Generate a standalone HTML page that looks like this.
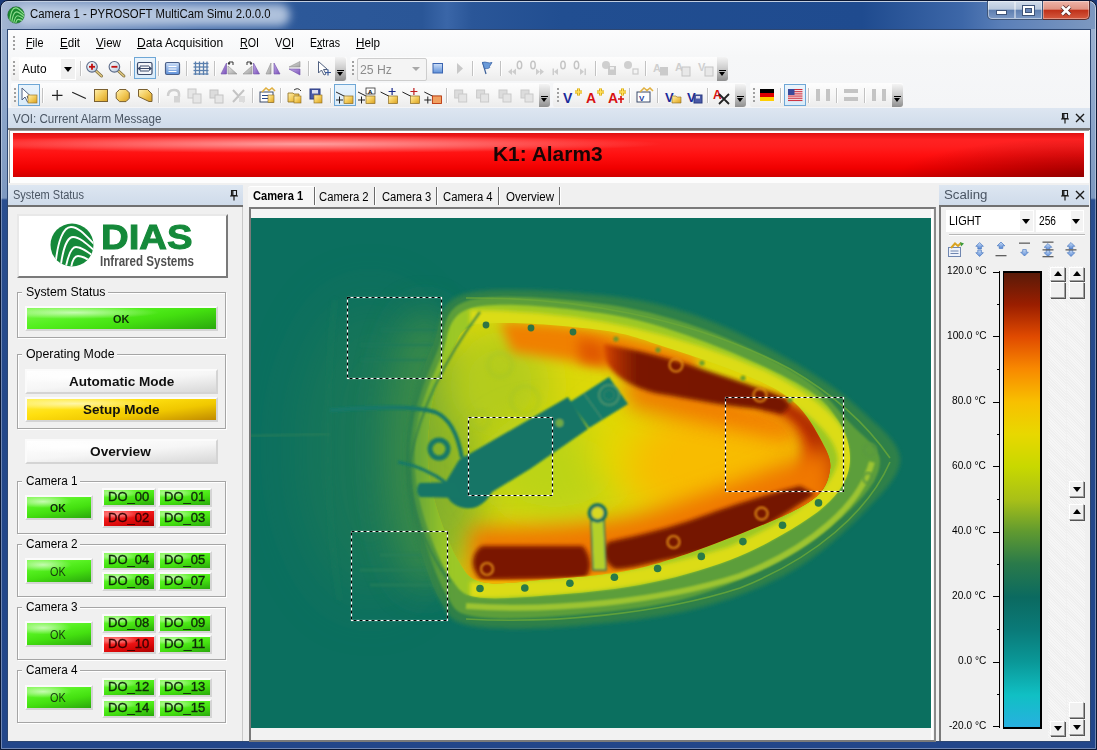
<!DOCTYPE html><html><head><meta charset="utf-8"><style>
*{margin:0;padding:0;box-sizing:border-box}
html,body{width:1097px;height:750px;overflow:hidden;background:#1b3a78;font-family:"Liberation Sans",sans-serif;font-size:12px;color:#000}
.a{position:absolute}
.t{position:absolute;white-space:nowrap;transform-origin:0 0}
.sep{position:absolute;width:2px;border-left:1px solid #c2c2c2;border-right:1px solid #fff}
.grip{position:absolute;width:2px;background:repeating-linear-gradient(#a0a0a0 0 2px,transparent 2px 4px)}
.chev{position:absolute;width:11px;background:linear-gradient(180deg,#f4f4f4 0%,#cfcfcf 45%,#8f8f8f 100%);border-radius:0 3px 3px 0}
.chev:after{content:"";position:absolute;left:2px;bottom:5px;width:0;height:0;border-top:4px solid #000;border-left:3.5px solid transparent;border-right:3.5px solid transparent}
.chev:before{content:"";position:absolute;left:2px;bottom:10px;width:7px;height:1.5px;background:#000}
.hl{position:absolute;border:1px solid #6ea7d6;background:linear-gradient(#eaf4fc,#d9ebf9)}
.ph{position:absolute;height:22px;background:linear-gradient(#dde6f1,#cfdbea);border-bottom:2px solid #707070}
.grp{position:absolute;border:1px solid #a5a5a5;box-shadow:inset 1px 1px 0 #fff,1px 1px 0 #fff}
.gla{position:absolute;background:#f0f0f0}
.bo{position:absolute;border:2px solid;border-color:#fbfbfb #d4d4d4 #d4d4d4 #fbfbfb}
.gbtn{background:radial-gradient(ellipse 45% 30% at 25% 22%,rgba(230,255,220,.75),rgba(230,255,220,0) 100%),linear-gradient(170deg,#7ff84e 0%,#55f020 35%,#44e010 60%,#2aa80c 100%)}
.rbtn{background:radial-gradient(ellipse 45% 30% at 25% 22%,rgba(255,220,220,.6),rgba(255,220,220,0) 100%),linear-gradient(170deg,#ff4a4a 0%,#f01818 40%,#d80808 70%,#a80000 100%)}
.sb{position:absolute;background:#f0f0f0;border:1px solid;border-color:#fff #a0a0a0 #a0a0a0 #fff;box-shadow:1px 1px 0 #555}
</style></head><body><div class="a" style="left:0px;top:0px;width:1097px;height:750px;background:linear-gradient(180deg,#a0b4d2 0,#8aa4c9 120px,#7d98c0 197px,#2a4e8f 199px,#24488a 400px,#22468a 750px);border:1px solid #0a1733;border-radius:8px 8px 0 0"></div>
<div class="a" style="left:1px;top:1px;width:1095px;height:748px;border:1px solid rgba(255,255,255,.35);border-radius:7px 7px 0 0"></div>
<div class="a" style="left:2px;top:2px;width:1093px;height:27px;border-radius:6px 6px 0 0;background:linear-gradient(90deg,#a4b6d2 0,#8aa2c8 30px,#3f68a8 200px,#2c5899 300px,#2a5697 420px,#3a66a8 445px,#2a5698 470px,#214e91 560px,#1f4b8f 860px,#3d67a8 960px,#5a7fb8 1000px,#7d98c0 1093px)"></div>
<div class="a" style="left:16px;top:4px;width:274px;height:22px;border-radius:11px;background:rgba(196,210,230,.85);filter:blur(4px)"></div>
<svg class="a" style="left:7px;top:6px" width="18" height="18" viewBox="0 0 46 46"><defs><clipPath id="ic"><circle cx="23" cy="23" r="21"/></clipPath></defs><circle cx="23" cy="23" r="21" fill="#1a8a30"/><circle cx="23" cy="23" r="21" fill="none" stroke="#0d5a1c" stroke-width="1.5"/><g clip-path="url(#ic)" stroke="#8edc8e" stroke-width="3" fill="none">
<path d="M7 38 C9 20 14 5 22 5 C30 5 37 14 47 24"/>
<path d="M12 42 C14 28 18 15 24 15 C31 15 38 22 47 30"/>
<path d="M17 44 C19 35 22 25 27 25 C33 25 39 30 47 36"/>
<path d="M22 46 C23 40 25 34 29 34 C34 34 39 37 45 42"/></g></svg>
<div class="t" style="left:29.50px;top:8.42px;font-size:12.5px;line-height:12.5px;color:#0a0a0a;transform:scaleX(0.9095);">Camera 1 - PYROSOFT MultiCam Simu 2.0.0.0</div>
<div class="a" style="left:987px;top:1px;width:29px;height:19px;border:1px solid #3e5578;border-top:none;border-radius:0 0 0 5px;background:linear-gradient(#d2ddeb 0,#b9c8dc 45%,#5f7fb0 52%,#7d9ac6 100%);box-shadow:inset 0 0 0 1px rgba(255,255,255,.45)"><div class="a" style="left:8px;top:9px;width:11px;height:5px;background:#fff;border:1px solid #3f5478"></div></div>
<div class="a" style="left:1015px;top:1px;width:28px;height:19px;border:1px solid #3e5578;border-top:none;border-left:none;background:linear-gradient(#d2ddeb 0,#b9c8dc 45%,#5f7fb0 52%,#7d9ac6 100%);box-shadow:inset 0 0 0 1px rgba(255,255,255,.45)"><div class="a" style="left:8px;top:5px;width:11px;height:9px;border:2.5px solid #fff;box-shadow:0 0 0 1px #3f5478,inset 0 0 0 1px #3f5478;background:#6a86b6"></div></div>
<div class="a" style="left:1043px;top:1px;width:47px;height:19px;border:1px solid #5a2e2e;border-top:none;border-left:none;border-radius:0 0 5px 0;background:linear-gradient(#eeb4a8 0,#e09484 45%,#c0321a 52%,#d45a40 100%);box-shadow:inset 0 0 0 1px rgba(255,255,255,.35)"><svg class="a" style="left:16px;top:3px" width="15" height="13"><path d="M3 2.5 L11 10.5 M11 2.5 L3 10.5" stroke="#5a2a2a" stroke-width="4.2"/><path d="M3 2.5 L11 10.5 M11 2.5 L3 10.5" stroke="#fff" stroke-width="2.6"/></svg></div>
<div class="a" style="left:7px;top:29px;width:1084px;height:713px;background:#f0f0f0;border:1px solid #2d4772"></div>
<div class="a" style="left:8px;top:30px;width:1082px;height:27px;background:linear-gradient(#fcfcfd,#f6f7f8)"></div>
<div class="grip" style="left:13px;top:36px;height:14px"></div>
<div class="t" style="left:26.40px;top:36.84px;font-size:12px;line-height:12px;color:#000;transform:scaleX(0.8998);text-underline-offset:1px"><u>F</u>ile</div>
<div class="t" style="left:60.20px;top:36.84px;font-size:12px;line-height:12px;color:#000;transform:scaleX(0.9672);text-underline-offset:1px"><u>E</u>dit</div>
<div class="t" style="left:95.70px;top:36.84px;font-size:12px;line-height:12px;color:#000;transform:scaleX(0.9692);text-underline-offset:1px"><u>V</u>iew</div>
<div class="t" style="left:137.40px;top:36.84px;font-size:12px;line-height:12px;color:#000;transform:scaleX(1.0005);text-underline-offset:1px"><u>D</u>ata Acquisition</div>
<div class="t" style="left:240.00px;top:36.84px;font-size:12px;line-height:12px;color:#000;transform:scaleX(0.8906);text-underline-offset:1px"><u>R</u>OI</div>
<div class="t" style="left:275.00px;top:36.84px;font-size:12px;line-height:12px;color:#000;transform:scaleX(0.9191);text-underline-offset:1px">V<u>O</u>I</div>
<div class="t" style="left:310.00px;top:36.84px;font-size:12px;line-height:12px;color:#000;transform:scaleX(0.8821);text-underline-offset:1px">E<u>x</u>tras</div>
<div class="t" style="left:356.00px;top:36.84px;font-size:12px;line-height:12px;color:#000;transform:scaleX(0.9724);text-underline-offset:1px"><u>H</u>elp</div>
<div class="a" style="left:8px;top:57px;width:1082px;height:51px;background:linear-gradient(#f6f7f8,#f4f5f7)"></div>
<div class="a" style="left:11px;top:57px;width:336px;height:24px;background:linear-gradient(#fdfdfd 0,#f6f6f6 50%,#ececec 100%);border-radius:2px"></div>
<div class="a" style="left:350px;top:57px;width:378px;height:24px;background:linear-gradient(#fdfdfd 0,#f6f6f6 50%,#ececec 100%);border-radius:2px"></div>
<div class="a" style="left:11px;top:83px;width:539px;height:24px;background:linear-gradient(#fdfdfd 0,#f6f6f6 50%,#ececec 100%);border-radius:2px"></div>
<div class="a" style="left:553px;top:83px;width:193px;height:24px;background:linear-gradient(#fdfdfd 0,#f6f6f6 50%,#ececec 100%);border-radius:2px"></div>
<div class="a" style="left:750px;top:83px;width:153px;height:24px;background:linear-gradient(#fdfdfd 0,#f6f6f6 50%,#ececec 100%);border-radius:2px"></div>
<div class="chev" style="left:335px;top:57px;height:24px"></div>
<div class="chev" style="left:717px;top:57px;height:24px"></div>
<div class="chev" style="left:539px;top:84px;height:23px"></div>
<div class="chev" style="left:735px;top:84px;height:23px"></div>
<div class="chev" style="left:892px;top:84px;height:23px"></div>
<div class="grip" style="left:13px;top:61px;height:15px"></div>
<div class="grip" style="left:352px;top:61px;height:15px"></div>
<div class="grip" style="left:14px;top:88px;height:15px"></div>
<div class="grip" style="left:557px;top:88px;height:15px"></div>
<div class="grip" style="left:753px;top:88px;height:15px"></div>
<div class="sep" style="left:80px;top:61px;height:15px"></div>
<div class="sep" style="left:130px;top:61px;height:15px"></div>
<div class="sep" style="left:158px;top:61px;height:15px"></div>
<div class="sep" style="left:186px;top:61px;height:15px"></div>
<div class="sep" style="left:214px;top:61px;height:15px"></div>
<div class="sep" style="left:308px;top:61px;height:15px"></div>
<div class="sep" style="left:472px;top:61px;height:15px"></div>
<div class="sep" style="left:500px;top:61px;height:15px"></div>
<div class="sep" style="left:595px;top:61px;height:15px"></div>
<div class="sep" style="left:645px;top:61px;height:15px"></div>
<div class="sep" style="left:42px;top:88px;height:15px"></div>
<div class="sep" style="left:158px;top:88px;height:15px"></div>
<div class="sep" style="left:252px;top:88px;height:15px"></div>
<div class="sep" style="left:280px;top:88px;height:15px"></div>
<div class="sep" style="left:330px;top:88px;height:15px"></div>
<div class="sep" style="left:446px;top:88px;height:15px"></div>
<div class="sep" style="left:629px;top:88px;height:15px"></div>
<div class="sep" style="left:657px;top:88px;height:15px"></div>
<div class="sep" style="left:707px;top:88px;height:15px"></div>
<div class="sep" style="left:780px;top:88px;height:15px"></div>
<div class="sep" style="left:808px;top:88px;height:15px"></div>
<div class="sep" style="left:836px;top:88px;height:15px"></div>
<div class="sep" style="left:864px;top:88px;height:15px"></div>
<div class="hl" style="left:134px;top:57px;width:22px;height:22px"></div>
<div class="hl" style="left:18px;top:84px;width:22px;height:22px"></div>
<div class="hl" style="left:334px;top:84px;width:22px;height:22px"></div>
<div class="hl" style="left:784px;top:84px;width:22px;height:22px"></div>
<div class="a" style="left:19px;top:58px;width:57px;height:22px;background:#fff"></div>
<div class="a" style="left:61px;top:59px;width:14px;height:20px;background:#f0f0f0"></div>
<div class="a" style="left:64px;top:67px;width:0px;height:0px;border-top:5px solid #000;border-left:4px solid transparent;border-right:4px solid transparent"></div>
<div class="t" style="left:21.50px;top:62.64px;font-size:12px;line-height:12px;color:#000;transform:scaleX(0.9925);">Auto</div>
<div class="a" style="left:357px;top:58px;width:70px;height:23px;background:#f4f4f4;border:1px solid #cdcdcd;border-radius:2px"></div>
<div class="a" style="left:412px;top:67px;width:0px;height:0px;border-top:4px solid #a8a8a8;border-left:4px solid transparent;border-right:4px solid transparent"></div>
<div class="t" style="left:360.00px;top:63.84px;font-size:12px;line-height:12px;color:#8c8c8c;transform:scaleX(1.0208);">25 Hz</div>
<svg class="a" style="left:0;top:0" width="1097" height="110"><defs>
<linearGradient id="gold" x1="0" y1="0" x2="1" y2="1"><stop offset="0" stop-color="#fff0b0"/><stop offset=".5" stop-color="#f3cb5a"/><stop offset="1" stop-color="#d9a020"/></linearGradient>
<linearGradient id="blu" x1="0" y1="0" x2="0" y2="1"><stop offset="0" stop-color="#cfe0f8"/><stop offset="1" stop-color="#5d8fd8"/></linearGradient>
<linearGradient id="lens" x1="0" y1="0" x2="1" y2="1"><stop offset="0" stop-color="#ffffff"/><stop offset="1" stop-color="#b8c8dc"/></linearGradient>
<linearGradient id="pur" x1="0" y1="0" x2="1" y2="1"><stop offset="0" stop-color="#c0a8e8"/><stop offset="1" stop-color="#7a50b8"/></linearGradient>
<linearGradient id="gry" x1="0" y1="0" x2="1" y2="1"><stop offset="0" stop-color="#e8e8e8"/><stop offset="1" stop-color="#a0a0a0"/></linearGradient>
<linearGradient id="dis" x1="0" y1="0" x2="1" y2="1"><stop offset="0" stop-color="#e4e4e4"/><stop offset="1" stop-color="#c4c4c4"/></linearGradient>
</defs><path d="M95 70 L101.5 76" stroke="#7a6a3a" stroke-width="3" stroke-linecap="round"/><path d="M95 70 L101.5 76" stroke="#e0c880" stroke-width="1.6" stroke-linecap="round"/><circle cx="92" cy="66.8" r="5.3" fill="url(#lens)" stroke="#5a6a88" stroke-width="1.1"/><path d="M89 66.8 h6" stroke="#c01010" stroke-width="1.8"/><path d="M92 63.8 v6" stroke="#c01010" stroke-width="1.8"/><path d="M117.4 70 L123.9 76" stroke="#7a6a3a" stroke-width="3" stroke-linecap="round"/><path d="M117.4 70 L123.9 76" stroke="#e0c880" stroke-width="1.6" stroke-linecap="round"/><circle cx="114.4" cy="66.8" r="5.3" fill="url(#lens)" stroke="#5a6a88" stroke-width="1.1"/><path d="M111.4 66.8 h6" stroke="#c01010" stroke-width="1.8"/><rect x="137.5" y="62.5" width="14.5" height="12" rx="1.5" fill="#f4f6fa" stroke="#3a4a6a" stroke-width="1.2"/><path d="M140 66h9M140 68.5h9M140 71h9" stroke="#3a4a6a" stroke-width="1"/><path d="M137.5 68.5 l3 -2.5 v5z M152 68.5 l-3 -2.5 v5z" fill="#3a4a6a"/><rect x="165.5" y="62.5" width="14" height="12" rx="1.5" fill="url(#blu)" stroke="#4a5f88" stroke-width="1.2"/><path d="M168.5 66.5h8M168.5 69h8M168.5 71.5h8" stroke="#fff" stroke-width="1"/><g stroke="#5a7fae" stroke-width="1.3"><path d="M195.5 61.5v13.5"/><path d="M199.5 61.5v13.5"/><path d="M203.5 61.5v13.5"/><path d="M207 61.5v13.5"/><path d="M193.5 63.5h15"/><path d="M193.5 67h15"/><path d="M193.5 70.5h15"/><path d="M193.5 74h15"/></g><path d="M221 74 L226.5 63 V74z" fill="url(#pur)" stroke="#7050a8" stroke-width=".6"/><path d="M228 74 V66 L237 74z" fill="url(#gry)" stroke="#909090" stroke-width=".6"/><path d="M229 65 v-3 h4 v3" stroke="#333" stroke-width="1" fill="none"/><path d="M227.5 64 l1.5 -2 1.5 2" fill="#333"/><path d="M243 74 L252 66 V74z" fill="url(#gry)" stroke="#909090" stroke-width=".6"/><path d="M253.5 74 V63 L259.5 74z" fill="url(#pur)" stroke="#7050a8" stroke-width=".6"/><path d="M247 65 v-3 h4 v3" stroke="#333" stroke-width="1" fill="none"/><path d="M249.5 64 l1.5 -2 1.5 2" fill="#333"/><path d="M266 74 L271 63 V74z" fill="url(#gry)" stroke="#909090" stroke-width=".6"/><path d="M274 74 V63 L280 74z" fill="url(#pur)" stroke="#7050a8" stroke-width=".6"/><path d="M289 67 L300 61.5 V67z" fill="url(#gry)" stroke="#909090" stroke-width=".6"/><path d="M289 69 L300 69 V75z" fill="url(#pur)" stroke="#7050a8" stroke-width=".6"/><path d="M318.5 61.5 V73 L321.5 70 L324 75 L326 74 L323.5 69.5 L327.5 69.5z" fill="#fff" stroke="#506080" stroke-width="1"/><path d="M325 72.5h6M328 69.5v6" stroke="#3a5a9a" stroke-width="1.2"/><rect x="433" y="63.5" width="9.5" height="9.5" fill="url(#blu)" stroke="#3a64b0" stroke-width="1"/><path d="M457 63 L463 68.5 L457 74z" fill="#c8c8c8"/><path d="M482.5 62 L486 74" stroke="#3a5f98" stroke-width="1.2"/><path d="M482.5 62.5 C486 61 488 64 492 62.5 L489.5 66.5 C491 68 487 69 484.5 68.5z" fill="#6a9ad8" stroke="#3a64a8" stroke-width=".8"/><g fill="none" stroke="#c4c4c4" stroke-width="1.5"><ellipse cx="519.5" cy="65" rx="2.2" ry="3.8"/><ellipse cx="533" cy="65" rx="2.2" ry="3.8"/><ellipse cx="563" cy="65" rx="2.2" ry="3.8"/><ellipse cx="576.5" cy="65" rx="2.2" ry="3.8"/></g><g fill="#cdcdcd"><path d="M512 68.5 l-4 3.3 4 3.3z M516 68.5 l-4 3.3 4 3.3z"/><path d="M536 68.5 l4 3.3 -4 3.3z M540 68.5 l4 3.3 -4 3.3z"/><path d="M558 68.5 l-4 3.3 4 3.3z"/><rect x="552.5" y="68.5" width="1.5" height="6.6"/><path d="M580 68.5 l4 3.3 -4 3.3z"/><rect x="584.5" y="68.5" width="1.5" height="6.6"/></g><circle cx="606" cy="65" r="4" fill="#cfcfcf"/><rect x="608" y="66" width="8" height="9" fill="#cbcbcb"/><rect x="610" y="67" width="4" height="2.5" fill="#eee"/><circle cx="628" cy="65" r="4" fill="#cfcfcf"/><rect x="633" y="69" width="5" height="5" fill="none" stroke="#cbcbcb" stroke-width="1.2"/><text x="653" y="72" font-family="Liberation Sans" font-size="11" font-weight="bold" fill="#cfcfcf">A</text><rect x="660" y="67" width="8" height="8.5" fill="#cbcbcb"/><text x="675" y="71" font-family="Liberation Sans" font-size="11" font-weight="bold" fill="#cfcfcf">A</text><rect x="682" y="67" width="8" height="9" fill="#e8e8e8" stroke="#c4c4c4"/><text x="698" y="71" font-family="Liberation Sans" font-size="11" font-weight="bold" fill="#cfcfcf">V</text><rect x="705" y="67" width="8" height="9" fill="#e8e8e8" stroke="#c4c4c4"/><path d="M22 88 V100 L25 97 L27.5 102 L29.5 101 L27 96.5 L31 96.5z" fill="#fff" stroke="#506080" stroke-width="1"/><rect x="28" y="95" width="9" height="8" fill="url(#gold)" stroke="#9a7a30" stroke-width=".7"/><path d="M52 95.3h10.5M57.2 90v10.6" stroke="#222" stroke-width="1.2"/><path d="M72.2 92.3 L85.9 98.5" stroke="#222" stroke-width="1.2"/><rect x="94.5" y="89.5" width="13" height="12" fill="url(#gold)" stroke="#7a6030" stroke-width="1"/><path d="M119.5 89.5 h6.5 l3.3 3.3 v5.5 l-3.3 3.3 h-6.5 l-3.3 -3.3 v-5.5z" fill="url(#gold)" stroke="#7a6030" stroke-width="1"/><path d="M138.5 89.5 h9 l4.5 4.5 v7.5 h-3 l-10.5 -5z" fill="url(#gold)" stroke="#7a6030" stroke-width="1"/><path d="M168 96 q0 -6 6 -6 q5 0 5 4 v3" stroke="#cfcfcf" stroke-width="2.5" fill="none"/><rect x="174" y="96" width="6" height="6.5" fill="#d4d4d4"/><rect x="188" y="89" width="8" height="9" fill="#e6e6e6" stroke="#c8c8c8"/><rect x="193" y="94" width="8" height="9" fill="#e6e6e6" stroke="#c8c8c8"/><rect x="210" y="90" width="8" height="8" fill="#dcdcdc" stroke="#c4c4c4"/><rect x="215" y="95" width="8" height="8" fill="#e6e6e6" stroke="#c4c4c4"/><path d="M233 90 L244 102 M244 90 L233 102" stroke="#c4c4c4" stroke-width="2"/><rect x="239" y="96" width="6" height="6" fill="#dcdcdc"/><rect x="260" y="92" width="13" height="10" fill="#fff" stroke="#3a4a6a"/><path d="M262 95.5h9M262 98.5h9" stroke="#2a4a8a" stroke-width="1.2"/><path d="M262 92 l4 -4 l3 2.5 l3 -2.5 l3 3" stroke="#e0b040" stroke-width="1.6" fill="none"/><rect x="268" y="95" width="6" height="7.5" fill="url(#gold)" stroke="#8a6a20" stroke-width=".6"/><path d="M288 93 h5 l1 1 h5 v8 h-11z" fill="url(#gold)" stroke="#8a6a20" stroke-width=".8"/><rect x="294" y="96" width="7" height="7" fill="url(#gold)" stroke="#8a6a20" stroke-width=".6"/><path d="M294 90 q4 -3 7 1" stroke="#333" stroke-width="1" fill="none"/><rect x="310" y="89" width="10" height="10" fill="#4a5aa8" stroke="#2a3a80"/><rect x="312" y="90" width="6" height="3.5" fill="#dde"/><rect x="314" y="95" width="8" height="8" fill="url(#gold)" stroke="#8a6a20" stroke-width=".6"/><path d="M336 92 L348 98" stroke="#222" stroke-width="1"/><rect x="344" y="96" width="9" height="7.5" fill="url(#gold)" stroke="#8a6a20" stroke-width=".7"/><path d="M336 100h7M339.5 96.5v7" stroke="#222" stroke-width="1"/><path d="M358 92 L370 98" stroke="#222" stroke-width="1"/><rect x="366" y="96" width="9" height="7.5" fill="url(#gold)" stroke="#8a6a20" stroke-width=".7"/><path d="M358 100h7M361.5 96.5v7" stroke="#222" stroke-width="1"/><rect x="366" y="88" width="9" height="6" fill="#fff" stroke="#333" stroke-width=".8"/><text x="368" y="93.5" font-size="6" font-family="Liberation Sans" font-weight="bold">A</text><path d="M380.6 92 L392.6 98" stroke="#222" stroke-width="1"/><rect x="388.6" y="96" width="9" height="7.5" fill="url(#gold)" stroke="#8a6a20" stroke-width=".7"/><path d="M388.6 91.5h7M392.1 88v7" stroke="#1a2a8a" stroke-width="1.2"/><path d="M402.4 92 L414.4 98" stroke="#222" stroke-width="1"/><rect x="410.4" y="96" width="9" height="7.5" fill="url(#gold)" stroke="#8a6a20" stroke-width=".7"/><path d="M410.4 91.5h7M413.9 88v7" stroke="#c02020" stroke-width="1.2"/><path d="M424.3 92 L436.3 98" stroke="#222" stroke-width="1"/><rect x="432.3" y="96" width="9" height="7.5" fill="url(#gold)" stroke="#8a6a20" stroke-width=".7"/><path d="M424.3 100h7M427.8 96.5v7" stroke="#222" stroke-width="1"/><rect x="432.5" y="96" width="9" height="7.5" fill="#f0a060" stroke="#c03010" stroke-width=".8"/><rect x="454.7" y="90" width="8" height="8" fill="#dcdcdc" stroke="#cacaca"/><rect x="458.7" y="94" width="8" height="8" fill="#e4e4e4" stroke="#cacaca"/><rect x="476.6" y="90" width="8" height="8" fill="#dcdcdc" stroke="#cacaca"/><rect x="480.6" y="94" width="8" height="8" fill="#e4e4e4" stroke="#cacaca"/><rect x="499" y="90" width="8" height="8" fill="#dcdcdc" stroke="#cacaca"/><rect x="503" y="94" width="8" height="8" fill="#e4e4e4" stroke="#cacaca"/><rect x="521" y="90" width="8" height="8" fill="#dcdcdc" stroke="#cacaca"/><rect x="525" y="94" width="8" height="8" fill="#e4e4e4" stroke="#cacaca"/><text x="563" y="103" font-family="Liberation Sans" font-size="14" font-weight="bold" fill="#1a2a9a">V</text><path d="M575 92h7M578.5 88.5v7" stroke="#d0a000" stroke-width="3"/><path d="M575 92h7M578.5 88.5v7" stroke="#ffe060" stroke-width="1.5"/><text x="586" y="103" font-family="Liberation Sans" font-size="14" font-weight="bold" fill="#d81010">A</text><path d="M597 92h7M600.5 88.5v7" stroke="#d0a000" stroke-width="3"/><path d="M597 92h7M600.5 88.5v7" stroke="#ffe060" stroke-width="1.5"/><text x="608" y="103" font-family="Liberation Sans" font-size="14" font-weight="bold" fill="#d81010">A</text><path d="M618 99h6M621 96v7" stroke="#d81010" stroke-width="1.6"/><path d="M619 92h7M622.5 88.5v7" stroke="#d0a000" stroke-width="3"/><path d="M619 92h7M622.5 88.5v7" stroke="#ffe060" stroke-width="1.5"/><rect x="637" y="92" width="13" height="10" fill="#fff" stroke="#3a4a6a"/><text x="639" y="101" font-size="8" font-family="Liberation Sans" font-weight="bold" fill="#1a3a9a">V</text><path d="M640 92 l4 -4 l3 2.5 l3 -2.5 l3 3" stroke="#e0b040" stroke-width="1.6" fill="none"/><text x="665" y="102" font-family="Liberation Sans" font-size="13" font-weight="bold" fill="#1a2a9a">V</text><path d="M672 96 h4 l1 1 h4 v6 h-9z" fill="url(#gold)" stroke="#8a6a20" stroke-width=".6"/><text x="687" y="102" font-family="Liberation Sans" font-size="13" font-weight="bold" fill="#1a2a9a">V</text><rect x="694" y="95" width="8" height="8" fill="#4a5aa8" stroke="#2a3a80"/><rect x="696" y="96" width="4" height="2.5" fill="#dde"/><text x="713" y="99" font-family="Liberation Sans" font-size="12" font-weight="bold" fill="#d81010">A</text><path d="M719 94 L729 104 M729 94 L719 104" stroke="#222" stroke-width="1.8"/><rect x="760" y="89" width="14" height="4" fill="#000"/><rect x="760" y="93" width="14" height="4" fill="#dd0000"/><rect x="760" y="97" width="14" height="4" fill="#ffce00"/><rect x="788" y="89" width="14.5" height="12" fill="#fff"/><rect x="788" y="89.00" width="14.5" height="0.95" fill="#c82030"/><rect x="788" y="90.85" width="14.5" height="0.95" fill="#c82030"/><rect x="788" y="92.70" width="14.5" height="0.95" fill="#c82030"/><rect x="788" y="94.55" width="14.5" height="0.95" fill="#c82030"/><rect x="788" y="96.40" width="14.5" height="0.95" fill="#c82030"/><rect x="788" y="98.25" width="14.5" height="0.95" fill="#c82030"/><rect x="788" y="100.10" width="14.5" height="0.95" fill="#c82030"/><rect x="788" y="89" width="6.5" height="6" fill="#3a4a9a"/><rect x="816" y="89" width="4" height="12" fill="#c4c4c4"/><rect x="826" y="89" width="4" height="12" fill="#c4c4c4"/><rect x="844" y="89" width="14" height="4" fill="#c4c4c4"/><rect x="844" y="97" width="14" height="4" fill="#c4c4c4"/><rect x="872" y="89" width="4" height="12" fill="#c4c4c4"/><rect x="882" y="89" width="4" height="12" fill="#c4c4c4"/></svg>
<div class="ph" style="left:8px;top:108px;width:1082px;"></div>
<div class="t" style="left:12.50px;top:112.74px;font-size:12px;line-height:12px;color:#4a5563;transform:scaleX(0.9681);">VOI: Current Alarm Message</div>
<svg class="a" style="left:1060px;top:112px" width="10" height="12"><path d="M2.5 1.5h5v5h-5z" stroke="#1a1a1a" stroke-width="1.1" fill="none"/><path d="M3.8 1.5v5" stroke="#1a1a1a" stroke-width="1.3"/><path d="M1 7h8M5 7v4.5" stroke="#1a1a1a" stroke-width="1.2"/></svg>
<svg class="a" style="left:1075px;top:113px" width="10" height="10"><path d="M1 1L9 9M9 1L1 9" stroke="#1a1a1a" stroke-width="1.4"/></svg>
<div class="a" style="left:9px;top:130px;width:1080px;height:53px;background:#fdfdfd;border-top:1px solid #9a9a9a;border-left:1px solid #9a9a9a"></div>
<div class="a" style="left:13px;top:133px;width:1071px;height:44px;background:linear-gradient(180deg,#e01010 0,#ff2222 15%,#ff1e1e 30%,#ff1010 50%,#f00000 80%,#d00000 100%)"></div>
<div class="a" style="left:13px;top:133px;width:1071px;height:44px;background:radial-gradient(ellipse 360px 9px at 290px 11px,rgba(255,200,200,.75),rgba(255,160,160,0) 100%)"></div>
<div class="a" style="left:13px;top:133px;width:1071px;height:44px;background:radial-gradient(ellipse 200px 40px at 1084px 44px,rgba(90,0,0,.55),rgba(90,0,0,0) 100%)"></div>
<div class="t" style="left:493.00px;top:144.07px;font-size:20px;line-height:20px;font-weight:bold;color:#1a0505;transform:scaleX(1.0453);">K1: Alarm3</div>
<div class="ph" style="left:8px;top:185px;width:235px;"></div>
<div class="t" style="left:13.00px;top:189.44px;font-size:12px;line-height:12px;color:#4a5563;transform:scaleX(0.9178);">System Status</div>
<svg class="a" style="left:229px;top:189px" width="10" height="12"><path d="M2.5 1.5h5v5h-5z" stroke="#1a1a1a" stroke-width="1.1" fill="none"/><path d="M3.8 1.5v5" stroke="#1a1a1a" stroke-width="1.3"/><path d="M1 7h8M5 7v4.5" stroke="#1a1a1a" stroke-width="1.2"/></svg>
<div class="a" style="left:8px;top:207px;width:235px;height:534px;background:#f0f0f0;border-right:1px solid #c8c8c8"></div>
<div class="a" style="left:17px;top:214px;width:211px;height:64px;background:#fff;border:2px solid;border-color:#e8e8e8 #7a7a7a #7a7a7a #e8e8e8"></div>
<svg class="a" style="left:49px;top:222px" width="46" height="46" viewBox="0 0 46 46">
<defs><clipPath id="lc"><circle cx="23" cy="23" r="21.5"/></clipPath></defs>
<circle cx="23" cy="23" r="21.5" fill="#15893a"/>
<g clip-path="url(#lc)" stroke="#fff" stroke-width="1.9" fill="none">
<path d="M7 38 C9 20 14 5 22 5 C30 5 37 14 47 24"/>
<path d="M12 42 C14 28 18 15 24 15 C31 15 38 22 47 30"/>
<path d="M17 44 C19 35 22 25 27 25 C33 25 39 30 47 36"/>
<path d="M22 46 C23 40 25 34 29 34 C34 34 39 37 45 42"/>
</g></svg>
<div class="t" style="left:100.50px;top:218.67px;font-size:35px;line-height:35px;font-weight:bold;color:#15893a;transform:scaleX(1.0942);-webkit-text-stroke:1px #15893a">DIAS</div>
<div class="t" style="left:100.00px;top:254.43px;font-size:14.5px;line-height:14.5px;font-weight:bold;color:#505050;transform:scaleX(0.7989);">Infrared Systems</div>
<div class="grp" style="left:17px;top:291.5px;width:209px;height:46px"></div>
<div class="a" style="left:22px;top:289.5px;width:86px;height:4px;background:#f0f0f0"></div>
<div class="t" style="left:25.50px;top:285.64px;font-size:12px;line-height:12px;color:#000;transform:scaleX(1.0276);">System Status</div>
<div class="bo gbtn" style="left:25px;top:306px;width:193px;height:25px;"></div>
<div class="t" style="left:112.60px;top:313.87px;font-size:11.5px;line-height:11.5px;font-weight:bold;color:#0f2a0a;transform:scaleX(0.9449);">OK</div>
<div class="grp" style="left:17px;top:354px;width:209px;height:75px"></div>
<div class="a" style="left:22px;top:352px;width:95px;height:4px;background:#f0f0f0"></div>
<div class="t" style="left:25.50px;top:348.14px;font-size:12px;line-height:12px;color:#000;transform:scaleX(1.0284);">Operating Mode</div>
<div class="bo " style="left:25px;top:369px;width:193px;height:25px;background:radial-gradient(ellipse 40% 35% at 25% 25%,rgba(255,255,255,1),rgba(255,255,255,0)),linear-gradient(175deg,#ffffff 0%,#f6f6f6 50%,#d8d8d8 100%)"></div>
<div class="t" style="left:68.60px;top:376.34px;font-size:12px;line-height:12px;font-weight:bold;color:#111;transform:scaleX(1.1292);">Automatic Mode</div>
<div class="bo " style="left:25px;top:397px;width:193px;height:25px;background:radial-gradient(ellipse 45% 30% at 25% 22%,rgba(255,250,200,.8),rgba(255,250,200,0)),linear-gradient(172deg,#fff04a 0%,#ffe010 35%,#f0c800 65%,#c08a00 100%)"></div>
<div class="t" style="left:82.60px;top:404.34px;font-size:12px;line-height:12px;font-weight:bold;color:#111;transform:scaleX(1.1235);">Setup Mode</div>
<div class="bo " style="left:25px;top:439px;width:193px;height:25px;background:radial-gradient(ellipse 40% 35% at 25% 25%,rgba(255,255,255,1),rgba(255,255,255,0)),linear-gradient(175deg,#ffffff 0%,#f6f6f6 50%,#d8d8d8 100%)"></div>
<div class="t" style="left:90.40px;top:446.34px;font-size:12px;line-height:12px;font-weight:bold;color:#111;transform:scaleX(1.1393);">Overview</div>
<div class="grp" style="left:17px;top:480.5px;width:209px;height:53px"></div>
<div class="a" style="left:22px;top:478.5px;width:58px;height:4px;background:#f0f0f0"></div>
<div class="t" style="left:25.50px;top:474.64px;font-size:12px;line-height:12px;color:#000;transform:scaleX(0.9774);">Camera 1</div>
<div class="bo gbtn" style="left:25px;top:495px;width:68px;height:25px;"></div>
<div class="t" style="left:50.00px;top:502.77px;font-size:11.5px;line-height:11.5px;font-weight:bold;color:#0f2a0a;transform:scaleX(0.9101);">OK</div>
<div class="bo gbtn" style="left:102px;top:488px;width:54px;height:19px;"></div>
<div class="t" style="left:107.80px;top:491.44px;font-size:12px;line-height:12px;color:#0f2a0a;transform:scaleX(1.0836);-webkit-text-stroke:.35px #0f2a0a">DO_00</div>
<div class="bo gbtn" style="left:158px;top:488px;width:54px;height:19px;"></div>
<div class="t" style="left:164.00px;top:491.44px;font-size:12px;line-height:12px;color:#0f2a0a;transform:scaleX(1.0836);-webkit-text-stroke:.35px #0f2a0a">DO_01</div>
<div class="bo rbtn" style="left:102px;top:509px;width:54px;height:19px;"></div>
<div class="t" style="left:107.80px;top:512.44px;font-size:12px;line-height:12px;color:#3a0000;transform:scaleX(1.0836);-webkit-text-stroke:.35px #3a0000">DO_02</div>
<div class="bo gbtn" style="left:158px;top:509px;width:54px;height:19px;"></div>
<div class="t" style="left:164.00px;top:512.44px;font-size:12px;line-height:12px;color:#0f2a0a;transform:scaleX(1.0836);-webkit-text-stroke:.35px #0f2a0a">DO_03</div>
<div class="grp" style="left:17px;top:543.7px;width:209px;height:53px"></div>
<div class="a" style="left:22px;top:541.7px;width:58px;height:4px;background:#f0f0f0"></div>
<div class="t" style="left:25.50px;top:537.84px;font-size:12px;line-height:12px;color:#000;transform:scaleX(0.9774);">Camera 2</div>
<div class="bo gbtn" style="left:25px;top:558px;width:68px;height:26px;"></div>
<div class="t" style="left:50.00px;top:565.54px;font-size:12px;line-height:12px;color:#173a10;transform:scaleX(0.9055);">OK</div>
<div class="bo gbtn" style="left:102px;top:551px;width:54px;height:19px;"></div>
<div class="t" style="left:107.80px;top:554.44px;font-size:12px;line-height:12px;color:#0f2a0a;transform:scaleX(1.0836);-webkit-text-stroke:.35px #0f2a0a">DO_04</div>
<div class="bo gbtn" style="left:158px;top:551px;width:54px;height:19px;"></div>
<div class="t" style="left:164.00px;top:554.44px;font-size:12px;line-height:12px;color:#0f2a0a;transform:scaleX(1.0836);-webkit-text-stroke:.35px #0f2a0a">DO_05</div>
<div class="bo gbtn" style="left:102px;top:572px;width:54px;height:19px;"></div>
<div class="t" style="left:107.80px;top:575.44px;font-size:12px;line-height:12px;color:#0f2a0a;transform:scaleX(1.0836);-webkit-text-stroke:.35px #0f2a0a">DO_06</div>
<div class="bo gbtn" style="left:158px;top:572px;width:54px;height:19px;"></div>
<div class="t" style="left:164.00px;top:575.44px;font-size:12px;line-height:12px;color:#0f2a0a;transform:scaleX(1.0836);-webkit-text-stroke:.35px #0f2a0a">DO_07</div>
<div class="grp" style="left:17px;top:606.9px;width:209px;height:53px"></div>
<div class="a" style="left:22px;top:604.9px;width:58px;height:4px;background:#f0f0f0"></div>
<div class="t" style="left:25.50px;top:601.04px;font-size:12px;line-height:12px;color:#000;transform:scaleX(0.9774);">Camera 3</div>
<div class="bo gbtn" style="left:25px;top:621px;width:68px;height:26px;"></div>
<div class="t" style="left:50.00px;top:628.74px;font-size:12px;line-height:12px;color:#173a10;transform:scaleX(0.9055);">OK</div>
<div class="bo gbtn" style="left:102px;top:614px;width:54px;height:19px;"></div>
<div class="t" style="left:107.80px;top:617.44px;font-size:12px;line-height:12px;color:#0f2a0a;transform:scaleX(1.0836);-webkit-text-stroke:.35px #0f2a0a">DO_08</div>
<div class="bo gbtn" style="left:158px;top:614px;width:54px;height:19px;"></div>
<div class="t" style="left:164.00px;top:617.44px;font-size:12px;line-height:12px;color:#0f2a0a;transform:scaleX(1.0836);-webkit-text-stroke:.35px #0f2a0a">DO_09</div>
<div class="bo rbtn" style="left:102px;top:635px;width:54px;height:19px;"></div>
<div class="t" style="left:107.80px;top:638.44px;font-size:12px;line-height:12px;color:#3a0000;transform:scaleX(1.0836);-webkit-text-stroke:.35px #3a0000">DO_10</div>
<div class="bo gbtn" style="left:158px;top:635px;width:54px;height:19px;"></div>
<div class="t" style="left:164.00px;top:638.44px;font-size:12px;line-height:12px;color:#0f2a0a;transform:scaleX(1.1096);-webkit-text-stroke:.35px #0f2a0a">DO_11</div>
<div class="grp" style="left:17px;top:670.1px;width:209px;height:53px"></div>
<div class="a" style="left:22px;top:668.1px;width:58px;height:4px;background:#f0f0f0"></div>
<div class="t" style="left:25.50px;top:664.24px;font-size:12px;line-height:12px;color:#000;transform:scaleX(0.9774);">Camera 4</div>
<div class="bo gbtn" style="left:25px;top:685px;width:68px;height:25px;"></div>
<div class="t" style="left:50.00px;top:691.94px;font-size:12px;line-height:12px;color:#173a10;transform:scaleX(0.9055);">OK</div>
<div class="bo gbtn" style="left:102px;top:678px;width:54px;height:19px;"></div>
<div class="t" style="left:107.80px;top:681.44px;font-size:12px;line-height:12px;color:#0f2a0a;transform:scaleX(1.0836);-webkit-text-stroke:.35px #0f2a0a">DO_12</div>
<div class="bo gbtn" style="left:158px;top:678px;width:54px;height:19px;"></div>
<div class="t" style="left:164.00px;top:681.44px;font-size:12px;line-height:12px;color:#0f2a0a;transform:scaleX(1.0836);-webkit-text-stroke:.35px #0f2a0a">DO_13</div>
<div class="bo gbtn" style="left:102px;top:699px;width:54px;height:19px;"></div>
<div class="t" style="left:107.80px;top:702.44px;font-size:12px;line-height:12px;color:#0f2a0a;transform:scaleX(1.0836);-webkit-text-stroke:.35px #0f2a0a">DO_14</div>
<div class="bo gbtn" style="left:158px;top:699px;width:54px;height:19px;"></div>
<div class="t" style="left:164.00px;top:702.44px;font-size:12px;line-height:12px;color:#0f2a0a;transform:scaleX(1.0836);-webkit-text-stroke:.35px #0f2a0a">DO_15</div>
<div class="a" style="left:243px;top:185px;width:697px;height:556px;background:#f0f0f0"></div>
<div class="a" style="left:248px;top:186px;width:67px;height:21px;background:#f6f6f6;border-radius:3px 3px 0 0;border-top:1px solid #fff"></div>
<div class="t" style="left:253.20px;top:189.84px;font-size:12px;line-height:12px;font-weight:bold;color:#000;transform:scaleX(0.9272);">Camera 1</div>
<div class="t" style="left:319.40px;top:190.84px;font-size:12px;line-height:12px;color:#000;transform:scaleX(0.9414);">Camera 2</div>
<div class="t" style="left:381.50px;top:190.84px;font-size:12px;line-height:12px;color:#000;transform:scaleX(0.9357);">Camera 3</div>
<div class="t" style="left:443.40px;top:190.84px;font-size:12px;line-height:12px;color:#000;transform:scaleX(0.9414);">Camera 4</div>
<div class="t" style="left:505.50px;top:190.84px;font-size:12px;line-height:12px;color:#000;transform:scaleX(0.9618);">Overview</div>
<div class="a" style="left:314px;top:187px;width:2px;height:18px;background:#6a6a6a;border-right:1px solid #fff"></div>
<div class="a" style="left:374px;top:187px;width:2px;height:18px;background:#6a6a6a;border-right:1px solid #fff"></div>
<div class="a" style="left:436px;top:187px;width:2px;height:18px;background:#6a6a6a;border-right:1px solid #fff"></div>
<div class="a" style="left:498px;top:187px;width:2px;height:18px;background:#6a6a6a;border-right:1px solid #fff"></div>
<div class="a" style="left:559px;top:187px;width:2px;height:18px;background:#6a6a6a;border-right:1px solid #fff"></div>
<div class="a" style="left:249px;top:207px;width:687px;height:535px;border:2px solid #7a7a7a;border-right-color:#8a8a8a;background:#f2f2f2"></div>
<div class="a" style="left:251px;top:209px;width:683px;height:9px;background:#f4f4f4"></div>
<div class="a" style="left:931px;top:209px;width:2px;height:531px;background:#fff"></div>
<div class="ph" style="left:939px;top:185px;width:150px;"></div>
<div class="t" style="left:943.50px;top:189.44px;font-size:12px;line-height:12px;color:#4a5563;transform:scaleX(1.1052);">Scaling</div>
<svg class="a" style="left:1060px;top:189px" width="10" height="12"><path d="M2.5 1.5h5v5h-5z" stroke="#1a1a1a" stroke-width="1.1" fill="none"/><path d="M3.8 1.5v5" stroke="#1a1a1a" stroke-width="1.3"/><path d="M1 7h8M5 7v4.5" stroke="#1a1a1a" stroke-width="1.2"/></svg>
<svg class="a" style="left:1075px;top:190px" width="10" height="10"><path d="M1 1L9 9M9 1L1 9" stroke="#1a1a1a" stroke-width="1.4"/></svg>
<div class="a" style="left:939px;top:207px;width:151px;height:534px;background:#f0f0f0;border-left:2px solid #7a7a7a"></div>
<div class="a" style="left:946px;top:210px;width:88px;height:22px;background:#fff"></div>
<div class="a" style="left:1020px;top:211px;width:13px;height:20px;background:#f3f3f3"></div>
<div class="a" style="left:1022px;top:219px;width:0px;height:0px;border-top:5px solid #000;border-left:4.5px solid transparent;border-right:4.5px solid transparent"></div>
<div class="t" style="left:948.50px;top:214.84px;font-size:12px;line-height:12px;color:#000;transform:scaleX(0.9140);">LIGHT</div>
<div class="a" style="left:1036px;top:210px;width:48px;height:22px;background:#fff"></div>
<div class="a" style="left:1071px;top:211px;width:12px;height:20px;background:#f3f3f3"></div>
<div class="a" style="left:1072px;top:219px;width:0px;height:0px;border-top:5px solid #000;border-left:4.5px solid transparent;border-right:4.5px solid transparent"></div>
<div class="t" style="left:1038.70px;top:214.84px;font-size:12px;line-height:12px;color:#000;transform:scaleX(0.8441);">256</div>
<div class="a" style="left:949px;top:234px;width:136px;height:1px;background:#b8b8b8"></div>
<div class="a" style="left:949px;top:235px;width:136px;height:1px;background:#fff"></div>
<svg class="a" style="left:0;top:0" width="1097" height="270"><g transform="translate(946 240)">
<rect x="2.5" y="7.5" width="12" height="9" fill="#eef2fa" stroke="#6f86b0"/><path d="M4.5 11h8M4.5 13.5h8" stroke="#6f86b0"/>
<path d="M5 8 L9 3.5 L12 6 L15 3" stroke="#d9a320" stroke-width="2" fill="none"/><path d="M14 2 l4 1.5 -3 3z" fill="#3a9a3a"/>
<g fill="url(#arw)" stroke="#4a78c0" stroke-width=".7"><path d="M33.6 2.5 l3.8 3.8 h-2 v2.6 h-3.6 v-2.6 h-2z"/><path d="M33.6 16.5 l3.8 -3.8 h-2 v-2.6 h-3.6 v2.6 h-2z"/><path d="M55 2 l3.8 3.8 h-2 v2.6 h-3.6 v-2.6 h-2z"/><path d="M78.5 16 l3.8 -3.8 h-2 v-2.6 h-3.6 v2.6 h-2z"/><path d="M102 3.5 l3.8 3.8 h-2 v2.6 h-3.6 v-2.6 h-2z"/><path d="M102 16.5 l3.8 -3.8 h-2 v-2.6 h-3.6 v2.6 h-2z"/><path d="M125 2.5 l3.8 3.8 h-2 v2.6 h-3.6 v-2.6 h-2z"/><path d="M125 16.5 l3.8 -3.8 h-2 v-2.6 h-3.6 v2.6 h-2z"/></g><g fill="#606060"><rect x="49.5" y="15" width="11" height="1.3"/><rect x="73" y="2.5" width="11" height="1.3"/><rect x="96.5" y="1.5" width="11" height="1.3"/><rect x="96.5" y="9.2" width="11" height="1.3"/><rect x="96.5" y="16" width="11" height="1.3"/><rect x="119.5" y="9.2" width="11" height="1.3"/></g><defs><linearGradient id="arw" x1="0" y1="0" x2="0" y2="1"><stop offset="0" stop-color="#c8dcf6"/><stop offset="1" stop-color="#5a8ad6"/></linearGradient></defs>
</g></svg>
<div class="a" style="left:1003px;top:271px;width:39px;height:458px;background:#000"></div>
<div class="a" style="left:1004px;top:273px;width:36px;height:454px;background:linear-gradient(180deg,#5a1a08 0%,#9a1e00 7%,#e04a00 14%,#f88800 21%,#f8c000 28.4%,#e8d800 35.5%,#c8d800 42.7%,#a8c018 50%,#609a30 57%,#2a7a4a 64%,#0b6a60 71.4%,#0a7a78 78.5%,#0a9898 85.7%,#10c0c4 93%,#28b0e0 100%)"></div>
<div class="a" style="left:999px;top:271px;width:1px;height:457px;background:#000"></div>
<div class="a" style="left:993px;top:272px;width:7px;height:1px;background:#000"></div>
<div class="t" style="left:946.81px;top:266.34px;font-size:10px;line-height:10px;color:#000;transform:scaleX(1.0120);">120.0 °C</div>
<div class="a" style="left:997px;top:304px;width:3px;height:1px;background:#000"></div>
<div class="a" style="left:993px;top:336px;width:7px;height:1px;background:#000"></div>
<div class="t" style="left:946.81px;top:331.34px;font-size:10px;line-height:10px;color:#000;transform:scaleX(1.0120);">100.0 °C</div>
<div class="a" style="left:997px;top:369px;width:3px;height:1px;background:#000"></div>
<div class="a" style="left:993px;top:402px;width:7px;height:1px;background:#000"></div>
<div class="t" style="left:952.44px;top:396.34px;font-size:10px;line-height:10px;color:#000;transform:scaleX(1.0120);">80.0 °C</div>
<div class="a" style="left:997px;top:434px;width:3px;height:1px;background:#000"></div>
<div class="a" style="left:993px;top:466px;width:7px;height:1px;background:#000"></div>
<div class="t" style="left:952.44px;top:461.34px;font-size:10px;line-height:10px;color:#000;transform:scaleX(1.0120);">60.0 °C</div>
<div class="a" style="left:997px;top:499px;width:3px;height:1px;background:#000"></div>
<div class="a" style="left:993px;top:532px;width:7px;height:1px;background:#000"></div>
<div class="t" style="left:952.44px;top:526.33px;font-size:10px;line-height:10px;color:#000;transform:scaleX(1.0120);">40.0 °C</div>
<div class="a" style="left:997px;top:564px;width:3px;height:1px;background:#000"></div>
<div class="a" style="left:993px;top:596px;width:7px;height:1px;background:#000"></div>
<div class="t" style="left:952.44px;top:591.33px;font-size:10px;line-height:10px;color:#000;transform:scaleX(1.0120);">20.0 °C</div>
<div class="a" style="left:997px;top:629px;width:3px;height:1px;background:#000"></div>
<div class="a" style="left:993px;top:662px;width:7px;height:1px;background:#000"></div>
<div class="t" style="left:958.06px;top:656.33px;font-size:10px;line-height:10px;color:#000;transform:scaleX(1.0120);">0.0 °C</div>
<div class="a" style="left:997px;top:694px;width:3px;height:1px;background:#000"></div>
<div class="a" style="left:993px;top:726px;width:7px;height:1px;background:#000"></div>
<div class="t" style="left:949.07px;top:721.33px;font-size:10px;line-height:10px;color:#000;transform:scaleX(1.0120);">-20.0 °C</div>
<div class="a" style="left:1048px;top:266px;width:18px;height:472px;background:repeating-linear-gradient(45deg,#f6f6f6 0 1px,#efefef 1px 2px)"></div>
<div class="a" style="left:1067px;top:266px;width:18px;height:472px;background:repeating-linear-gradient(45deg,#f6f6f6 0 1px,#efefef 1px 2px)"></div>
<div class="sb" style="left:1050px;top:267px;width:15px;height:14px"><div class="a" style="left:3px;top:3px;border-bottom:5px solid #000;border-left:4.5px solid transparent;border-right:4.5px solid transparent"></div></div>
<div class="sb" style="left:1050px;top:282px;width:15px;height:16px"></div>
<div class="sb" style="left:1050px;top:721px;width:15px;height:15px"><div class="a" style="left:3px;top:4px;border-top:5px solid #000;border-left:4.5px solid transparent;border-right:4.5px solid transparent"></div></div>
<div class="sb" style="left:1069px;top:267px;width:15px;height:14px"><div class="a" style="left:3px;top:3px;border-bottom:5px solid #000;border-left:4.5px solid transparent;border-right:4.5px solid transparent"></div></div>
<div class="sb" style="left:1069px;top:282px;width:15px;height:16px"></div>
<div class="sb" style="left:1069px;top:481px;width:15px;height:16px"><div class="a" style="left:3px;top:5px;border-top:5px solid #000;border-left:4.5px solid transparent;border-right:4.5px solid transparent"></div></div>
<div class="sb" style="left:1069px;top:504px;width:15px;height:16px"><div class="a" style="left:3px;top:4px;border-bottom:5px solid #000;border-left:4.5px solid transparent;border-right:4.5px solid transparent"></div></div>
<div class="sb" style="left:1069px;top:702px;width:15px;height:16px"></div>
<div class="sb" style="left:1069px;top:719px;width:15px;height:16px"><div class="a" style="left:3px;top:5px;border-top:5px solid #000;border-left:4.5px solid transparent;border-right:4.5px solid transparent"></div></div>
<div class="a" style="left:251px;top:218px;width:680px;height:510px;overflow:hidden;background:#0b6f5f">
<svg class="a" style="left:0;top:0" width="680" height="510"><defs>
<filter id="b1" x="-20%" y="-20%" width="140%" height="140%"><feGaussianBlur stdDeviation="1"/></filter>
<filter id="b2" x="-20%" y="-20%" width="140%" height="140%"><feGaussianBlur stdDeviation="2"/></filter>
<filter id="b3" x="-30%" y="-30%" width="160%" height="160%"><feGaussianBlur stdDeviation="3.5"/></filter>
<filter id="b6" x="-40%" y="-40%" width="180%" height="180%"><feGaussianBlur stdDeviation="6"/></filter>
<filter id="b10" x="-50%" y="-50%" width="200%" height="200%"><feGaussianBlur stdDeviation="10"/></filter>
<filter id="b18" x="-50%" y="-50%" width="200%" height="200%"><feGaussianBlur stdDeviation="18"/></filter>
<filter id="b30" x="-80%" y="-80%" width="260%" height="260%"><feGaussianBlur stdDeviation="30"/></filter>
<linearGradient id="lfade" x1="0" x2="1"><stop offset="0" stop-color="#0b6f5f" stop-opacity="0"/><stop offset=".45" stop-color="#1a7655" stop-opacity=".5"/><stop offset=".75" stop-color="#3a8a48" stop-opacity=".45"/><stop offset="1" stop-color="#5a9a38" stop-opacity="0"/></linearGradient>
<clipPath id="inner"><path d="M482 324 C506.7 320.7 569.0 326.0 600 330 C631.0 334.0 642.7 340.0 668 348 C693.3 356.0 730.8 368.8 752 378 C773.2 387.2 783.3 392.3 795 403 C806.7 413.7 816.2 430.8 822 442 C827.8 453.2 831.7 460.3 830 470 C828.3 479.7 826.2 489.7 812 500 C797.8 510.3 773.7 520.7 745 532 C716.3 543.3 674.2 560.0 640 568 C605.8 576.0 566.3 577.7 540 580 C513.7 582.3 495.7 585.3 482 582 C468.3 578.7 465.7 572.8 458 560 C450.3 547.2 441.0 522.5 436 505 C431.0 487.5 428.3 473.3 428 455 C427.7 436.7 430.0 412.5 434 395 C438.0 377.5 444.0 361.8 452 350 C460.0 338.2 457.3 327.3 482 324 Z"/></clipPath><clipPath id="halo"><path d="M464 294 C491.8 285.7 560.7 291.2 600 295 C639.3 298.8 666.7 305.2 700 317 C733.3 328.8 772.7 350.0 800 366 C827.3 382.0 847.3 397.3 864 413 C880.7 428.7 900.3 443.2 900 460 C899.7 476.8 880.3 495.3 862 514 C843.7 532.7 818.7 556.0 790 572 C761.3 588.0 728.3 600.8 690 610 C651.7 619.2 597.0 624.5 560 627 C523.0 629.5 488.0 629.5 468 625 C448.0 620.5 448.7 615.0 440 600 C431.3 585.0 421.7 555.8 416 535 C410.3 514.2 406.8 495.8 406 475 C405.2 454.2 406.5 431.7 411 410 C415.5 388.3 424.2 364.3 433 345 C441.8 325.7 436.2 302.3 464 294 Z"/></clipPath><clipPath id="sole"><path d="M471 308 C497.7 300.2 561.8 307.7 600 313 C638.2 318.3 666.7 328.0 700 340 C733.3 352.0 777.0 371.7 800 385 C823.0 398.3 829.7 407.8 838 420 C846.3 432.2 850.0 446.0 850 458 C850.0 470.0 846.3 481.0 838 492 C829.7 503.0 818.0 512.7 800 524 C782.0 535.3 756.7 549.8 730 560 C703.3 570.2 671.7 579.0 640 585 C608.3 591.0 567.3 594.0 540 596 C512.7 598.0 490.7 599.7 476 597 C461.3 594.3 459.7 590.3 452 580 C444.3 569.7 436.0 551.7 430 535 C424.0 518.3 418.0 499.2 416 480 C414.0 460.8 414.0 440.0 418 420 C422.0 400.0 431.2 378.7 440 360 C448.8 341.3 444.3 315.8 471 308 Z"/></clipPath></defs><g transform="translate(-251 -218)"><rect x="251" y="218" width="680" height="510" fill="#0b6f5f"/><ellipse cx="370" cy="450" rx="70" ry="150" fill="#2a8050" opacity=".45" filter="url(#b30)"/><ellipse cx="425" cy="450" rx="40" ry="140" fill="#3e8c46" opacity=".9" filter="url(#b18)"/><path d="M250 436 L330 434" stroke="#2a7e58" stroke-width="3" opacity=".6" filter="url(#b1)"/><path d="M335 300 C325 380 325 520 340 600" stroke="#1f7a5c" stroke-width="3" fill="none" opacity=".6" filter="url(#b2)"/><path d="M360 345 L440 345 M360 360 L440 360 M380 330 L440 330" stroke="#1f7a5c" stroke-width="3" opacity=".5" filter="url(#b1)"/><path d="M360 570 L450 570 M370 585 L450 585 M380 555 L445 555" stroke="#2a8058" stroke-width="3" opacity=".6" filter="url(#b1)"/><path d="M464 294 C491.8 285.7 560.7 291.2 600 295 C639.3 298.8 666.7 305.2 700 317 C733.3 328.8 772.7 350.0 800 366 C827.3 382.0 847.3 397.3 864 413 C880.7 428.7 900.3 443.2 900 460 C899.7 476.8 880.3 495.3 862 514 C843.7 532.7 818.7 556.0 790 572 C761.3 588.0 728.3 600.8 690 610 C651.7 619.2 597.0 624.5 560 627 C523.0 629.5 488.0 629.5 468 625 C448.0 620.5 448.7 615.0 440 600 C431.3 585.0 421.7 555.8 416 535 C410.3 514.2 406.8 495.8 406 475 C405.2 454.2 406.5 431.7 411 410 C415.5 388.3 424.2 364.3 433 345 C441.8 325.7 436.2 302.3 464 294 Z" fill="#2f8049" filter="url(#b2)"/><path d="M467 301 C493.3 292.8 556.2 298.5 595 303 C633.8 307.5 665.8 315.8 700 328 C734.2 340.2 775.0 360.2 800 376 C825.0 391.8 836.7 408.8 850 423 C863.3 437.2 879.7 446.8 880 461 C880.3 475.2 869.3 491.2 852 508 C834.7 524.8 804.7 546.7 776 562 C747.3 577.3 716.0 591.0 680 600 C644.0 609.0 594.7 613.3 560 616 C525.3 618.7 491.0 619.7 472 616 C453.0 612.3 454.2 607.5 446 594 C437.8 580.5 428.8 554.3 423 535 C417.2 515.7 412.5 497.5 411 478 C409.5 458.5 409.7 439.0 414 418 C418.3 397.0 428.2 371.5 437 352 C445.8 332.5 440.7 309.2 467 301 Z" fill="#5c9e3a" filter="url(#b1)"/><path d="M466 619 C550 624 660 614 740 588 C815 558 868 512 890 462" stroke="#6aa838" stroke-width="1.6" fill="none" opacity=".8"/><path d="M466 298 C570 297 690 316 790 369 C840 398 872 432 890 458" stroke="#6aa838" stroke-width="1.6" fill="none" opacity=".8"/><path d="M466 606 C550 612 660 602 740 576 C812 548 860 505 872 462" stroke="#9cc430" stroke-width="6" fill="none" filter="url(#b1)"/><path d="M471 308 C497.7 300.2 561.8 307.7 600 313 C638.2 318.3 666.7 328.0 700 340 C733.3 352.0 777.0 371.7 800 385 C823.0 398.3 829.7 407.8 838 420 C846.3 432.2 850.0 446.0 850 458 C850.0 470.0 846.3 481.0 838 492 C829.7 503.0 818.0 512.7 800 524 C782.0 535.3 756.7 549.8 730 560 C703.3 570.2 671.7 579.0 640 585 C608.3 591.0 567.3 594.0 540 596 C512.7 598.0 490.7 599.7 476 597 C461.3 594.3 459.7 590.3 452 580 C444.3 569.7 436.0 551.7 430 535 C424.0 518.3 418.0 499.2 416 480 C414.0 460.8 414.0 440.0 418 420 C422.0 400.0 431.2 378.7 440 360 C448.8 341.3 444.3 315.8 471 308 Z" fill="#9cc828" filter="url(#b1)"/><g clip-path="url(#sole)"><path d="M470 318 C560 318 660 334 760 377 C812 402 846 432 846 462 C840 495 800 525 730 555 C650 580 560 590 470 590" stroke="#dcdc14" stroke-width="16" fill="none" filter="url(#b2)"/></g><rect x="340" y="218" width="110" height="510" fill="url(#lfade)" clip-path="url(#halo)" filter="url(#b3)"/><g clip-path="url(#inner)"><rect x="400" y="300" width="460" height="300" fill="#dcd808"/><ellipse cx="420" cy="470" rx="35" ry="130" fill="#6a9e34" filter="url(#b18)"/><ellipse cx="450" cy="455" rx="45" ry="110" fill="#88b42c" opacity=".8" filter="url(#b18)"/><ellipse cx="500" cy="385" rx="50" ry="55" fill="#b4cc1c" filter="url(#b18)"/><ellipse cx="555" cy="470" rx="70" ry="50" fill="#bcd414" filter="url(#b18)"/><ellipse cx="650" cy="450" rx="60" ry="45" fill="#e4d800" filter="url(#b18)"/><ellipse cx="720" cy="455" rx="95" ry="60" fill="#f8bc00" transform="rotate(-15 720 455)" filter="url(#b18)"/><path d="M500 322 C570 322 640 336 700 358 L690 385 C640 372 580 362 512 352 Z" fill="#f08000" filter="url(#b6)"/><path d="M620 370 C690 385 760 405 800 425 L790 442 C740 428 680 420 630 408 Z" fill="#f07000" opacity=".85" filter="url(#b10)"/><path d="M760 392 C815 405 845 445 838 485 C828 515 795 530 760 535 L765 510 C792 495 808 470 800 440 C795 420 780 412 760 408 Z" fill="#d04000" filter="url(#b6)"/><path d="M780 400 C822 418 840 450 832 482 C824 500 810 506 790 510 L792 498 C808 490 818 470 812 448 C806 428 795 418 776 410 Z" fill="#a82800" opacity=".75" filter="url(#b3)"/><linearGradient id="us" x1="0" x2="1"><stop offset="0" stop-color="#d04000"/><stop offset=".18" stop-color="#7a1800"/><stop offset="1" stop-color="#761600"/></linearGradient><path d="M604 344 C640 350 680 361 720 375 C745 383 765 390 784 398 L790 406 L782 414 C765 410 752 408 740 407 C715 404 690 399 660 394 C630 388 600 370 604 344 Z" fill="url(#us)" filter="url(#b2)"/><path d="M578 338 L604 344 L606 365 L580 362 Z" fill="#e05800" filter="url(#b6)"/><path d="M470 528 C540 528 610 525 660 508 C715 490 770 470 830 445 L836 505 C770 540 700 565 630 578 C570 590 500 592 470 588 Z" fill="#f07800" filter="url(#b10)"/><path d="M482 546 L583 546 C592 558 592 572 585 578 L482 580 C470 570 470 554 482 546 Z" fill="#7a1200" filter="url(#b2)"/><path d="M608 542 C640 535 670 528 700 517 C725 508 750 499 800 486 L815 494 C790 510 770 525 746 537 C720 548 690 555 660 561 C640 566 625 569 615 569 C603 562 602 550 608 542 Z" fill="#741400" filter="url(#b2)"/><path d="M470 583 C540 588 640 578 720 553 C780 532 820 508 838 480" stroke="#f4b400" stroke-width="7" fill="none" filter="url(#b1)"/></g><path d="M480 312 C444 360 420 412 410 460 C408 500 422 545 450 582" stroke="#2f7e4c" stroke-width="2.2" fill="none" opacity=".8" filter="url(#b1)"/><g filter="url(#b1)"><path d="M568 397 L588 429 L530 469 L492 492 C486 503 476 510 465 508 C450 506 442 494 447 480 L459 460 Z" fill="#127566"/><path d="M570 402 L609 377 L628 404 L589 428 Z" fill="#177a68"/><path d="M583.7 393.3 L602.7 419.6" stroke="#3f8a6a" stroke-width="1.5"/><circle cx="609" cy="395" r="10" fill="none" stroke="#45906c" stroke-width="2"/><circle cx="609" cy="395" r="5" fill="none" stroke="#2f8068" stroke-width="1.5"/><circle cx="559.5" cy="423" r="4" fill="#70aa44"/><path d="M455 482 L420 483 C416 486 416 494 420 497 L462 498 Z" fill="#147666"/><path d="M330 410 C370 408 410 405 435 412 C450 418 458 435 462 458" stroke="#167868" stroke-width="4" fill="none"/><path d="M398 462 C415 465 432 472 448 484" stroke="#167868" stroke-width="3" fill="none"/><circle cx="439" cy="449" r="9" fill="none" stroke="#167868" stroke-width="5"/><path d="M591 520 L604 520 L606 570 L593 570 Z" fill="#b4d02c" stroke="#2a7a5a" stroke-width="1.5"/><circle cx="597.5" cy="513" r="8" fill="#d8d820" stroke="#1f7560" stroke-width="4"/></g><circle cx="487" cy="569" r="6" fill="none" stroke="#e89418" stroke-width="2.6" opacity=".75" filter="url(#b1)"/><circle cx="676" cy="365" r="6.5" fill="none" stroke="#e89418" stroke-width="2.6" opacity=".75" filter="url(#b1)"/><circle cx="760" cy="395" r="6.5" fill="none" stroke="#e89418" stroke-width="2.6" opacity=".75" filter="url(#b1)"/><circle cx="673.5" cy="542" r="6" fill="none" stroke="#e89418" stroke-width="2.6" opacity=".75" filter="url(#b1)"/><circle cx="761.6" cy="513.6" r="6" fill="none" stroke="#e89418" stroke-width="2.6" opacity=".75" filter="url(#b1)"/><circle cx="616" cy="339" r="2.6" fill="#5a9a30" opacity=".85" filter="url(#b1)"/><circle cx="658" cy="350" r="2.6" fill="#5a9a30" opacity=".85" filter="url(#b1)"/><circle cx="702" cy="363" r="2.6" fill="#5a9a30" opacity=".85" filter="url(#b1)"/><circle cx="743" cy="378" r="2.6" fill="#5a9a30" opacity=".85" filter="url(#b1)"/><circle cx="790" cy="400" r="2.6" fill="#5a9a30" opacity=".85" filter="url(#b1)"/><circle cx="500" cy="365" r="12" fill="none" stroke="#9cc02a" stroke-width="2" opacity=".6" filter="url(#b2)"/><circle cx="525" cy="400" r="14" fill="none" stroke="#9cc02a" stroke-width="2" opacity=".6" filter="url(#b2)"/><circle cx="480" cy="420" r="9" fill="none" stroke="#9cc02a" stroke-width="2" opacity=".6" filter="url(#b2)"/><circle cx="870" cy="450" r="6" fill="none" stroke="#5a9a40" stroke-width="3" opacity=".8" filter="url(#b1)"/><circle cx="868" cy="478" r="5" fill="none" stroke="#5a9a40" stroke-width="3" opacity=".8" filter="url(#b1)"/><circle cx="480" cy="588.5" r="3.8" fill="#2a7a48"/><circle cx="524.8" cy="588" r="3.8" fill="#2a7a48"/><circle cx="569.9" cy="583.2" r="3.8" fill="#2a7a48"/><circle cx="614.4" cy="577.3" r="3.8" fill="#2a7a48"/><circle cx="657.6" cy="568.5" r="3.8" fill="#2a7a48"/><circle cx="701.3" cy="556.4" r="3.8" fill="#2a7a48"/><circle cx="742.9" cy="541.6" r="3.8" fill="#2a7a48"/><circle cx="782.5" cy="525.2" r="3.8" fill="#2a7a48"/><circle cx="818.5" cy="502.9" r="3.8" fill="#2a7a48"/><circle cx="486" cy="325" r="3.4" fill="#2f7444"/><circle cx="531" cy="328" r="3.4" fill="#2f7444"/><circle cx="573" cy="332" r="3.4" fill="#2f7444"/></g><rect x="96.5" y="79.5" width="94" height="81" fill="none" stroke="#fff" stroke-width="1.2"/><rect x="96.5" y="79.5" width="94" height="81" fill="none" stroke="#000" stroke-width="1.2" stroke-dasharray="3 3"/><rect x="217.5" y="199.5" width="84" height="78" fill="none" stroke="#fff" stroke-width="1.2"/><rect x="217.5" y="199.5" width="84" height="78" fill="none" stroke="#000" stroke-width="1.2" stroke-dasharray="3 3"/><rect x="100.5" y="313.5" width="96" height="89" fill="none" stroke="#fff" stroke-width="1.2"/><rect x="100.5" y="313.5" width="96" height="89" fill="none" stroke="#000" stroke-width="1.2" stroke-dasharray="3 3"/><rect x="474.5" y="179.5" width="118" height="94" fill="none" stroke="#fff" stroke-width="1.2"/><rect x="474.5" y="179.5" width="118" height="94" fill="none" stroke="#000" stroke-width="1.2" stroke-dasharray="3 3"/></svg>
</div></body></html>
